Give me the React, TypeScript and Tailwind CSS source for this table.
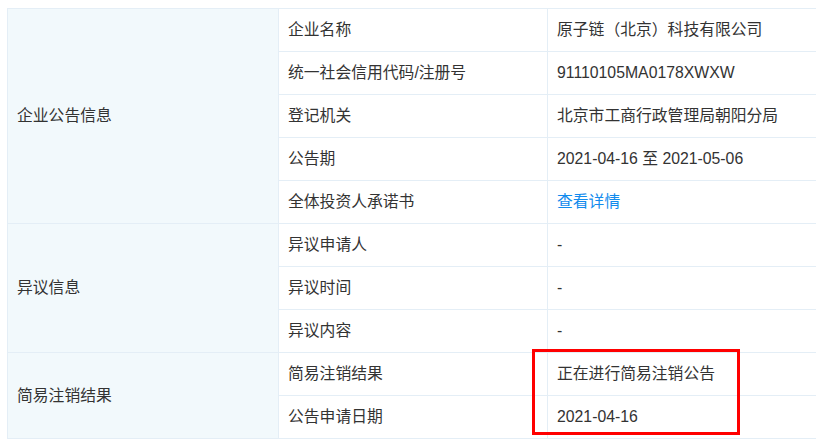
import React from "react";

const font = { fontFamily: '"Liberation Sans", Arial, "Noto Sans CJK SC", sans-serif' };

type Row = { label: string; value: React.ReactNode };

const groups: { title: string; rows: Row[] }[] = [
  {
    title: "企业公告信息",
    rows: [
      { label: "企业名称", value: "原子链（北京）科技有限公司" },
      { label: "统一社会信用代码/注册号", value: "91110105MA0178XWXW" },
      { label: "登记机关", value: "北京市工商行政管理局朝阳分局" },
      { label: "公告期", value: "2021-04-16 至 2021-05-06" },
      { label: "全体投资人承诺书", value: <span className="text-[#128bed]">查看详情</span> },
    ],
  },
  {
    title: "异议信息",
    rows: [
      { label: "异议申请人", value: "-" },
      { label: "异议时间", value: "-" },
      { label: "异议内容", value: "-" },
    ],
  },
  {
    title: "简易注销结果",
    rows: [
      { label: "简易注销结果", value: "正在进行简易注销公告" },
      { label: "公告申请日期", value: "2021-04-16" },
    ],
  },
];

export default function App() {
  return (
    <div className="relative w-[816px] h-[444px] overflow-hidden bg-white pt-2 pl-[7px]" style={font}>
      <table className="border-collapse w-[830px] table-fixed text-[15.8px] text-[#333]">
        <colgroup>
          <col className="w-[271px]" />
          <col className="w-[269px]" />
          <col />
        </colgroup>
        <tbody>
          {groups.map((g) =>
            g.rows.map((r, i) => (
              <tr key={g.title + r.label} className="h-[43px]">
                {i === 0 && (
                  <td
                    rowSpan={g.rows.length}
                    className="border border-[#e4eef6] bg-[#f2f9fc] pl-[9px] pr-[10px] align-middle"
                  >
                    {g.title}
                  </td>
                )}
                <td className="border border-[#e4eef6] px-[9px] align-middle whitespace-nowrap">{r.label}</td>
                <td className="border border-[#e4eef6] px-[9px] align-middle whitespace-nowrap">{r.value}</td>
              </tr>
            ))
          )}
        </tbody>
      </table>
      <div className="absolute left-[532px] top-[349px] w-[208px] h-[86px] border-[3px] border-[#ff0000]" />
    </div>
  );
}
